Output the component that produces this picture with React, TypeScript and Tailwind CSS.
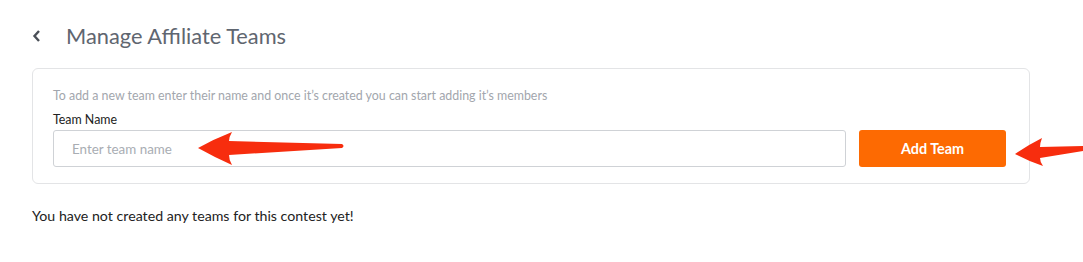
import React from "react";

// red annotation arrows drawn over the screenshot
const ArrowLong = () => (
  <svg className="absolute left-[198px] top-[130px]" width="148" height="38" viewBox="0 0 148 38" fill="#f72d0e">
    <path d="M0 18 Q16 9 34 2 Q31 7 31 11 L144 14 Q147 16 144 18 L31 25 Q31 30 34 35 Q16 27 0 18 Z" />
  </svg>
);

const ArrowShort = () => (
  <svg className="absolute left-[1015px] top-[137px]" width="68" height="31" viewBox="0 0 68 31" fill="#f72d0e">
    <path d="M0 17 Q13 8 27 1 Q25 6 25 10 L68 9 L68 14 L25 21 Q25 25 28 29 Q13 24 0 17 Z" />
  </svg>
);

const App = () => {
  return (
    <div className="relative w-[1083px] h-[262px] bg-white font-['Lato','Open_Sans',sans-serif]">
      <div className="pt-[24px] pl-[32px] pr-[53px]">
        <div className="flex items-center h-[24px]">
          <svg width="10" height="14" viewBox="0 0 10 14" className="mr-[24px]">
            <path d="M7 2 L2.5 7 L7 12" stroke="#4a4f57" strokeWidth="2.4" fill="none" />
          </svg>
          <h1 className="text-[21.8px] text-[#5f6670] leading-none">Manage Affiliate Teams</h1>
        </div>
        <div className="mt-[20px] border border-[#e3e4e6] rounded-[6px] pl-[20px] pr-[23px] pt-[19px] pb-[16px]">
          <p className="text-[12.4px] text-[#a2a6ad] leading-[16px]">
            To add a new team enter their name and once it’s created you can start adding it’s members
          </p>
          <p className="mt-[8px] text-[12.4px] text-[#222] leading-[16px]">Team Name</p>
          <div className="mt-[2px] flex gap-[13px]">
            <input
              className="flex-1 h-[37px] rounded-[3px] border border-[#cfd2d6] px-[18px] text-[13.4px] outline-none placeholder:text-[#a9adb3]"
              placeholder="Enter team name"
              type="text"
            />
            <button className="w-[147px] h-[37px] rounded-[3px] bg-[#fd6a02] text-white text-[14.4px] font-bold">
              Add Team
            </button>
          </div>
        </div>
        <p className="mt-[22px] text-[14.2px] text-[#222] leading-[20px]">
          You have not created any teams for this contest yet!
        </p>
      </div>
      <ArrowLong />
      <ArrowShort />
    </div>
  );
};

export default App;
